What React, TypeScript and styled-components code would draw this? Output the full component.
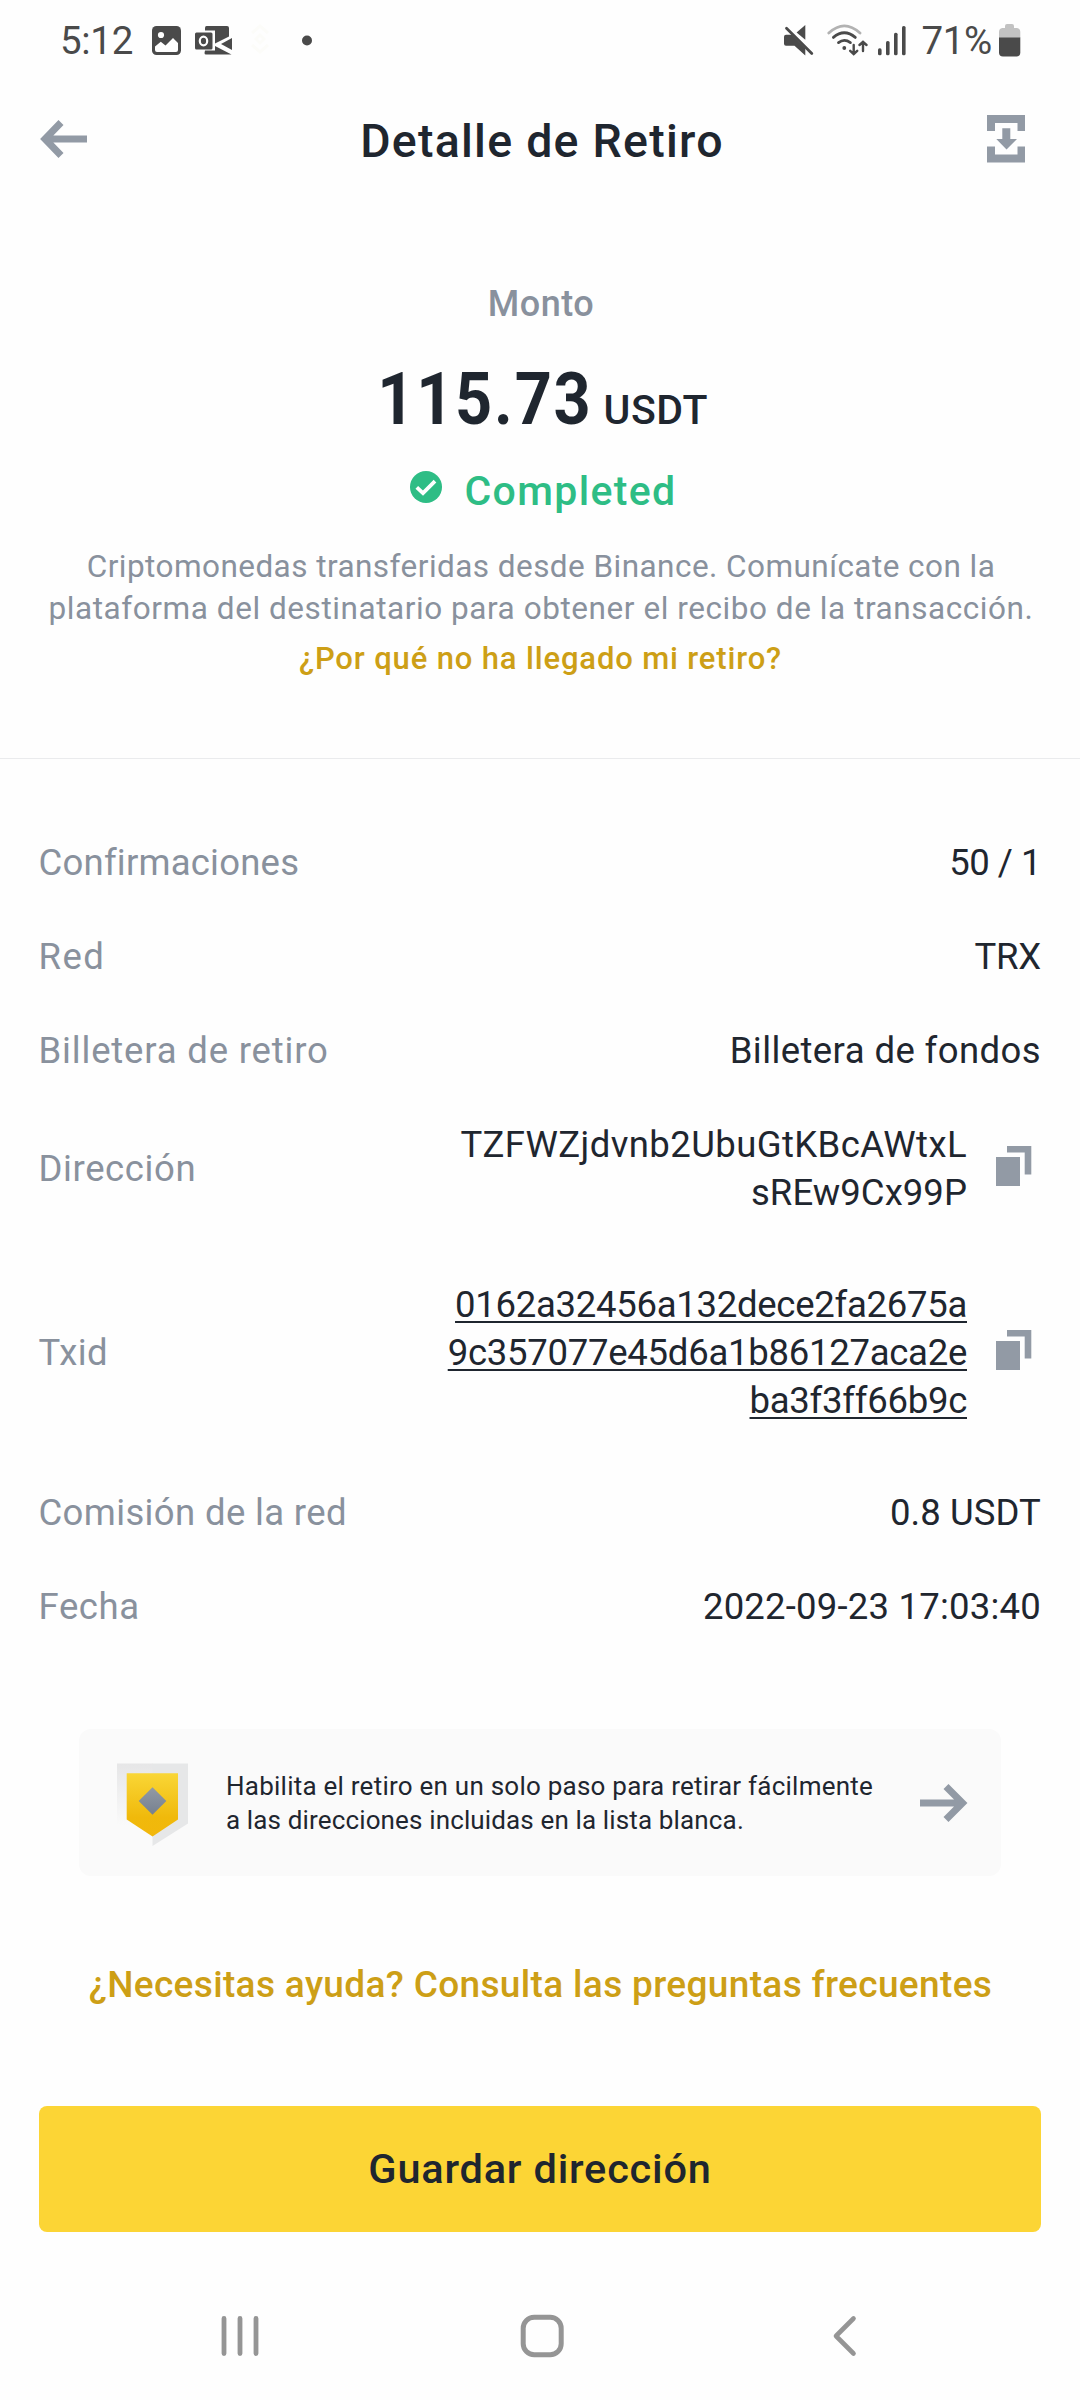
import React from 'react';
import styled, { createGlobalStyle } from 'styled-components';

const color = {
  page: '#fefefe',
  ink: '#1f262f',
  muted: '#89919d',
  icon: '#929aa5',
  gold: '#cd9f16',
  green: '#2ebd85',
  yellow: '#fcd535',
  system: '#4a4a4a',
  nav: '#959595',
};

const GlobalStyle = createGlobalStyle`
  body {
    margin: 0;
    background: ${color.page};
    font-family: Roboto, 'Noto Sans', sans-serif;
    color: ${color.ink};
  }
`;

const Screen = styled.main`
  display: flex;
  flex-direction: column;
  width: 1080px;
  height: 2400px;
  overflow: hidden;
`;

/* Status bar */
const StatusBar = styled.div`
  display: flex;
  justify-content: space-between;
  box-sizing: border-box;
  height: 80px;
  padding: 0 59px 0 60px;
  color: ${color.system};
`;

const StatusGroup = styled.div`
  display: flex;
  align-items: center;
  svg { display: block; flex: none; }
`;

const StatusText = styled.span`
  font-size: 38.5px;
  line-height: 79px;
  letter-spacing: -0.3px;
`;

const Gap = styled.span<{ $w: number }>`
  flex: none;
  width: ${(p) => p.$w}px;
`;

/* Header */
const Header = styled.header`
  display: flex;
  align-items: center;
  justify-content: space-between;
  box-sizing: border-box;
  height: 117px;
  padding: 0 55px 0 40px;
`;

const IconButton = styled.button`
  display: flex;
  padding: 0;
  border: 0;
  background: none;
  color: ${color.icon};
`;

const Title = styled.h1`
  margin: 5px 0 0 9px;
  font-size: 46.5px;
  line-height: 60px;
  font-weight: 500;
  letter-spacing: 1.25px;
`;

/* Summary */
const Summary = styled.section`
  display: flex;
  flex-direction: column;
  align-items: center;
  box-sizing: border-box;
  height: 562px;
  padding-top: 85px;
  border-bottom: 1px solid #eaebed;
`;

const Caption = styled.div`
  padding-left: 2px;
  font-size: 36px;
  line-height: 44px;
  letter-spacing: 0.47px;
  font-weight: 500;
  color: ${color.muted};
`;

const AmountRow = styled.div`
  display: flex;
  align-items: baseline;
  height: 86px;
  margin-top: 30px;
`;

const Amount = styled.span`
  margin-left: -22px;
  font-size: 73px;
  line-height: 86px;
  font-weight: 700;
  letter-spacing: 2px;
  transform: scaleX(0.888);
  transform-origin: right center;
`;

const Unit = styled.span`
  margin-left: 11px;
  font-size: 41px;
  font-weight: 500;
  letter-spacing: 0.5px;
`;

const StatusLine = styled.div`
  display: flex;
  align-items: center;
  height: 50px;
  margin-top: 24px;
  color: ${color.green};
  font-size: 41px;
  line-height: 50px;
  font-weight: 500;
  letter-spacing: 1.34px;
  svg { margin: 0 23px 8px 6px; }
`;

const Note = styled.p`
  margin: 30px 0 0 2px;
  font-size: 31.5px;
  line-height: 42px;
  text-align: center;
  color: ${color.muted};
`;

const NoteLine = styled.span<{ $track: number }>`
  display: block;
  letter-spacing: ${(p) => p.$track}px;
`;

const WhyLink = styled.a`
  margin-top: 8px;
  padding-left: 1px;
  font-size: 31px;
  line-height: 42px;
  font-weight: 500;
  letter-spacing: 0.85px;
  color: ${color.gold};
`;

/* Details */
const Details = styled.dl`
  display: flex;
  flex-direction: column;
  margin: 0;
  padding: 57px 39px 0 38.5px;
  font-size: 36.5px;
  line-height: 48px;
`;

const DetailRow = styled.div<{ $pad?: number }>`
  display: flex;
  align-items: center;
  padding: ${(p) => p.$pad ?? 23}px 0;
`;

const Term = styled.dt<{ $track: number }>`
  flex: 1;
  letter-spacing: ${(p) => p.$track}px;
  color: ${color.muted};
`;

const Value = styled.dd`
  display: flex;
  flex-direction: column;
  align-items: flex-end;
  margin: 0;
`;

const ValueLine = styled.span<{ $track: number; $link?: boolean }>`
  letter-spacing: ${(p) => p.$track}px;
  text-decoration: ${(p) => (p.$link ? 'underline' : 'none')};
  text-decoration-thickness: 2px;
  text-underline-offset: 4px;
  text-decoration-skip-ink: none;
`;

const CopyButton = styled(IconButton)`
  margin: 0 9px 6px 29px;
`;

/* Whitelist card */
const Card = styled.aside`
  display: flex;
  align-items: center;
  box-sizing: border-box;
  height: 147px;
  margin: 75px 79px 0;
  padding: 0 33px 0 38px;
  border-radius: 12px;
  background: #fafafa;
  svg { display: block; flex: none; }
`;

const CardText = styled.p`
  flex: 1;
  margin: 1px 0 0 38px;
  font-size: 26px;
  line-height: 34px;
  white-space: nowrap;
`;

const HelpLink = styled.a`
  align-self: center;
  margin-top: 84px;
  padding-left: 1px;
  font-size: 37px;
  line-height: 50px;
  font-weight: 500;
  letter-spacing: 0.35px;
  color: ${color.gold};
`;

const SaveButton = styled.button`
  height: 126px;
  margin: 96px 39px 0;
  padding: 0;
  border: 0;
  border-radius: 8px;
  background: ${color.yellow};
  color: ${color.ink};
  font: 500 41.5px/50px Roboto, 'Noto Sans', sans-serif;
  letter-spacing: 0.8px;
`;

/* System navigation */
const NavBar = styled.nav`
  display: flex;
  align-items: center;
  justify-content: space-between;
  box-sizing: border-box;
  height: 168px;
  padding: 40px 222px 0 219px;
  color: ${color.nav};
`;

const PhotoIcon = () => (
  <svg width="29" height="29" viewBox="0 0 29 29">
    <rect width="29" height="29" rx="4.5" fill="currentColor" />
    <circle cx="9" cy="9" r="3.1" fill={color.page} />
    <path d="M3 20.5 L8.8 15.8 L13.5 19.6 L21 12 L26 17 V24 Q26 26 24 26 H5 Q3 26 3 24Z" fill={color.page} />
  </svg>
);

const OutlookIcon = () => (
  <svg width="37" height="29" viewBox="0 0 37 29">
    <path d="M11.5 0 H32 Q34 0 34 2 V10.5 L20 17.5 V4.5 H10 V2 Q10 0 11.5 0Z" fill="currentColor" />
    <path d="M37 12 V24 L26 18Z" fill="currentColor" />
    <path d="M10 24.5 H20 L20 20 L36.5 28.5 H11 Q9.5 28.5 9.5 27Z" fill="currentColor" />
    <rect x="0" y="6.5" width="17.5" height="17" rx="1.5" fill="currentColor" />
    <ellipse cx="8.5" cy="15" rx="3.7" ry="4.3" fill="none" stroke={color.page} strokeWidth="2.2" />
  </svg>
);

const FaintDiamondIcon = () => (
  <svg width="28" height="32" viewBox="0 0 28 32" fill="none" stroke="#fcfcf9" strokeWidth="3">
    <path d="M6 9 L14 2 L22 9 M6 21 L14 28 L22 21 M14 11 L18 15 L14 19 L10 15Z" />
  </svg>
);

const MuteIcon = () => (
  <svg width="30" height="31" viewBox="0 0 30 31">
    <path d="M2 9.7 H7.5 L21.3 23.5 V30.5 L10.5 20.8 H2 Q0 20.8 0 18.8 V11.7 Q0 9.7 2 9.7Z" fill="currentColor" />
    <path d="M12.6 7.4 L21.3 0 V14.8Z" fill="currentColor" />
    <path d="M2.5 3.2 L27.8 28.6" stroke="currentColor" strokeWidth="2.8" strokeLinecap="round" />
  </svg>
);

const WifiIcon = () => (
  <svg width="41" height="32" viewBox="0 0 41 32" fill="none" stroke="currentColor" strokeWidth="2.8" strokeLinecap="round">
    <path d="M1.8 9 Q17.3 -5.3 33 9" opacity="0.42" />
    <path d="M6.4 13.4 Q17.3 4.2 28.3 13.4" />
    <path d="M11.5 18.6 Q17.3 14.2 23.4 18.6" />
    <circle cx="17.3" cy="24" r="1.9" fill="currentColor" stroke="none" />
    <path d="M26.7 21 V29.4 M23.2 26.8 L26.7 30 L30.2 26.8 M36 27 V18.4 M32.5 21 L36 17.8 L39.5 21" strokeWidth="2.4" />
  </svg>
);

const SignalIcon = () => (
  <svg width="28" height="31" viewBox="0 0 28 31" fill="currentColor">
    <rect x="0" y="23.3" width="3.6" height="7" rx="1.6" />
    <rect x="8" y="16" width="3.6" height="14.3" rx="1.6" />
    <rect x="16" y="7.7" width="3.6" height="22.6" rx="1.6" />
    <rect x="24" y="1" width="3.6" height="29.3" rx="1.6" />
  </svg>
);

const BatteryIcon = () => (
  <svg width="22" height="33" viewBox="0 0 22 33">
    <path d="M6 2 Q6 0 8 0 H13 Q15 0 15 2 V4 H18 Q21.3 4.5 21.3 8 V14 H0 V8 Q0 4.5 3.3 4 H6Z" fill="#c2c2c2" />
    <path d="M0 13.5 H21.3 V28.5 Q21.3 32.5 17.3 32.5 H4 Q0 32.5 0 28.5Z" fill="currentColor" />
  </svg>
);

const BackIcon = () => (
  <svg width="48" height="38" viewBox="0 0 48 38" fill="none" stroke="currentColor" strokeWidth="7">
    <path d="M5 19 H47 M21 2.5 L5 19 L21 35.5" />
  </svg>
);

const SaveImageIcon = () => (
  <svg width="38" height="48" viewBox="0 0 38 48" fill="currentColor">
    <path d="M0 0 H38 V16 H30.5 V8 H8 V16 H0Z" />
    <path d="M0 31.5 H8 V39.5 H30.5 V31.5 H38 V47.5 H0Z" />
    <path d="M15.3 13.3 H23.3 V24 H30 L19.5 34.5 L9.3 24 H15.3Z" />
  </svg>
);

const CheckIcon = () => (
  <svg width="32" height="32" viewBox="0 0 32 32">
    <circle cx="16" cy="16" r="16" fill={color.green} />
    <path d="M6.8 16.3 L13 22.2 L25 10.2" fill="none" stroke={color.page} strokeWidth="3.8" />
  </svg>
);

const CopyIcon = () => (
  <svg width="36" height="40" viewBox="0 0 36 40" fill="currentColor">
    <rect x="0" y="11" width="24" height="29" />
    <path d="M11 0 H35.3 V28.5 H28.7 V6.4 H11Z" />
  </svg>
);

const ShieldIcon = () => (
  <svg width="71" height="80" viewBox="0 0 71 80" overflow="visible">
    <defs>
      <linearGradient id="shieldEdge" x1="0" y1="0" x2="0" y2="1">
        <stop offset="0" stopColor="#e6e6e7" />
        <stop offset="0.75" stopColor="#fafafa" />
      </linearGradient>
      <linearGradient id="shieldBody" x1="0" y1="0" x2="0" y2="1">
        <stop offset="0" stopColor="#f9d636" />
        <stop offset="0.7" stopColor="#f0b90b" />
        <stop offset="1" stopColor="#f2b70c" />
      </linearGradient>
      <linearGradient id="shieldGem" x1="0" y1="0" x2="0" y2="1">
        <stop offset="0" stopColor="#929aa5" />
        <stop offset="1" stopColor="#76808f" />
      </linearGradient>
    </defs>
    <path d="M0 0.5 H36 V83 L0 60.5Z" fill="url(#shieldEdge)" />
    <path d="M35.5 0.5 H71 V60.5 L35.5 83Z" fill="#e6e7e8" />
    <path d="M9.7 10.3 H61 V56.5 L35.5 73.5 L9.7 56.5Z" fill="url(#shieldBody)" />
    <path d="M35.5 24.3 L49.3 38 L35.5 51.8 L21.7 38Z" fill="url(#shieldGem)" />
  </svg>
);

const ForwardIcon = () => (
  <svg width="48" height="38" viewBox="0 0 48 38" fill="none" stroke={color.icon} strokeWidth="7">
    <path d="M0 19 H42 M26 2.5 L42.5 19 L26 35.5" />
  </svg>
);

const RecentsIcon = () => (
  <svg width="41" height="42" viewBox="0 0 41 42" stroke="currentColor" strokeWidth="4.8" strokeLinecap="round">
    <path d="M5 3.5 V38.5 M21 3.5 V38.5 M37 3.5 V38.5" />
  </svg>
);

const HomeIcon = () => (
  <svg width="52" height="44" viewBox="0 0 52 44">
    <rect x="3.2" y="3.2" width="38" height="37.6" rx="11" fill="none" stroke="currentColor" strokeWidth="5" />
  </svg>
);

const NavBackIcon = () => (
  <svg width="26" height="42" viewBox="0 0 26 42" fill="none" stroke="currentColor" strokeWidth="4.6" strokeLinecap="round" strokeLinejoin="round">
    <path d="M21.5 3.5 L4 21 L21.5 38.5" />
  </svg>
);

type Detail = {
  term: string;
  termTrack: number;
  lines: [string, number][];
  pad?: number;
  link?: boolean;
  copy?: boolean;
};

const details: Detail[] = [
  { term: 'Confirmaciones', termTrack: 0.22, lines: [['50 / 1', -0.5]] },
  { term: 'Red', termTrack: 1.4, lines: [['TRX', -0.2]] },
  { term: 'Billetera de retiro', termTrack: 0.82, lines: [['Billetera de fondos', 0.41]] },
  {
    term: 'Dirección',
    termTrack: 0.6,
    lines: [['TZFWZjdvnb2UbuGtKBcAWtxL', 0.41], ['sREw9Cx99P', 0.05]],
    copy: true,
  },
  {
    term: 'Txid',
    termTrack: 0.4,
    lines: [
      ['0162a32456a132dece2fa2675a', -0.28],
      ['9c357077e45d6a1b86127aca2e', -0.27],
      ['ba3f3ff66b9c', -0.26],
    ],
    pad: 41,
    link: true,
    copy: true,
  },
  { term: 'Comisión de la red', termTrack: 0.36, lines: [['0.8 USDT', 0.1]] },
  { term: 'Fecha', termTrack: 0.6, lines: [['2022-09-23 17:03:40', 0.21]] },
];

export default function App() {
  return (
    <Screen>
      <GlobalStyle />
      <StatusBar>
        <StatusGroup>
          <StatusText>5:12</StatusText>
          <Gap $w={19} />
          <PhotoIcon />
          <Gap $w={14} />
          <OutlookIcon />
          <Gap $w={14} />
          <FaintDiamondIcon />
          <Gap $w={28} />
          <svg width="10" height="11" viewBox="0 0 10 11">
            <circle cx="5" cy="5.5" r="5" fill="currentColor" />
          </svg>
        </StatusGroup>
        <StatusGroup>
          <MuteIcon />
          <Gap $w={13} />
          <WifiIcon />
          <Gap $w={10} />
          <SignalIcon />
          <Gap $w={15} />
          <StatusText>71%</StatusText>
          <Gap $w={7} />
          <BatteryIcon />
        </StatusGroup>
      </StatusBar>

      <Header>
        <IconButton aria-label="Atrás"><BackIcon /></IconButton>
        <Title>Detalle de Retiro</Title>
        <IconButton aria-label="Guardar imagen"><SaveImageIcon /></IconButton>
      </Header>

      <Summary>
        <Caption>Monto</Caption>
        <AmountRow>
          <Amount>115.73</Amount>
          <Unit>USDT</Unit>
        </AmountRow>
        <StatusLine>
          <CheckIcon />
          Completed
        </StatusLine>
        <Note>
          <NoteLine $track={0.45}>Criptomonedas transferidas desde Binance. Comunícate con la</NoteLine>
          <NoteLine $track={0.56}>plataforma del destinatario para obtener el recibo de la transacción.</NoteLine>
        </Note>
        <WhyLink>¿Por qué no ha llegado mi retiro?</WhyLink>
      </Summary>

      <Details>
        {details.map((d) => (
          <DetailRow key={d.term} $pad={d.pad}>
            <Term $track={d.termTrack}>{d.term}</Term>
            <Value>
              {d.lines.map(([text, track]) => (
                <ValueLine key={text} $track={track} $link={d.link}>{text}</ValueLine>
              ))}
            </Value>
            {d.copy && <CopyButton aria-label="Copiar"><CopyIcon /></CopyButton>}
          </DetailRow>
        ))}
      </Details>

      <Card>
        <ShieldIcon />
        <CardText>
          <NoteLine $track={0.24}>Habilita el retiro en un solo paso para retirar fácilmente</NoteLine>
          <NoteLine $track={0.14}>a las direcciones incluidas en la lista blanca.</NoteLine>
        </CardText>
        <ForwardIcon />
      </Card>

      <HelpLink>¿Necesitas ayuda? Consulta las preguntas frecuentes</HelpLink>
      <SaveButton>Guardar dirección</SaveButton>

      <NavBar>
        <RecentsIcon />
        <HomeIcon />
        <NavBackIcon />
      </NavBar>
    </Screen>
  );
}
